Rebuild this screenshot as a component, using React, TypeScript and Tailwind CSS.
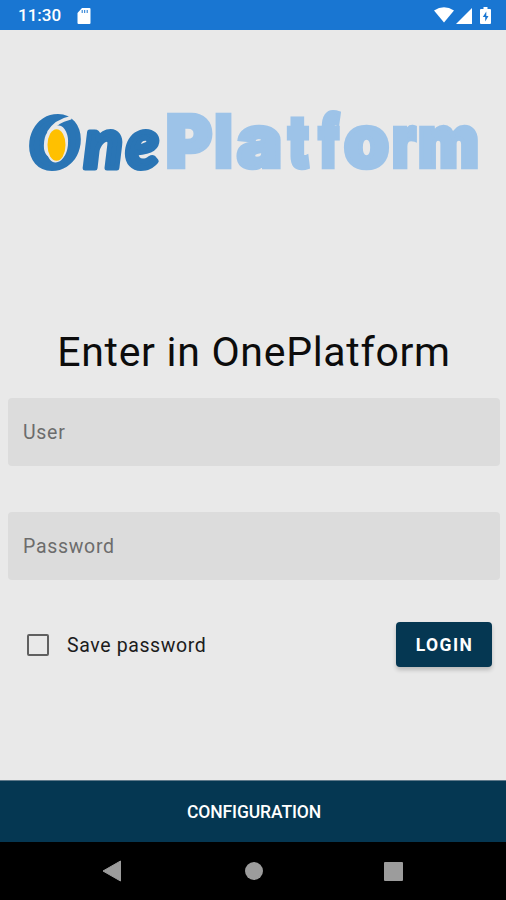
import React from 'react';

type Glyph = { char: string; x: number; width: number };

const platformGlyphs: Glyph[] = [
  { char: 'P', x: 166, width: 46 },
  { char: 'l', x: 214.5, width: 18 },
  { char: 'a', x: 237, width: 45 },
  { char: 't', x: 288, width: 21 },
  { char: 'f', x: 318.5, width: 21 },
  { char: 'o', x: 344, width: 45 },
  { char: 'r', x: 392, width: 24 },
  { char: 'm', x: 418, width: 61 },
];

const oneGlyphs: Glyph[] = [
  { char: 'O', x: 29, width: 51 },
  { char: 'n', x: 84, width: 39 },
  { char: 'e', x: 126, width: 33 },
];

function Logo() {
  return (
    <svg width="506" height="120" viewBox="0 80 506 120" aria-label="OnePlatform">
      <g
        fill="#2a75b5"
        stroke="#2a75b5"
        strokeWidth="5"
        strokeLinejoin="round"
        fontFamily="Lato, sans-serif"
        fontWeight="900"
        fontStyle="italic"
        fontSize="71"
      >
        {oneGlyphs.map((g) => (
          <text key={g.char} x={g.x} y="167.5" textLength={g.width} lengthAdjust="spacingAndGlyphs">
            {g.char}
          </text>
        ))}
      </g>
      <ellipse cx="57" cy="144" rx="11" ry="18.5" fill="#e9e9e9" transform="rotate(6 57 144)" />
      <path d="M49 132Q56 121 70 118" fill="none" stroke="#e9e9e9" strokeWidth="3.5" strokeLinecap="round" />
      <ellipse cx="56.5" cy="145" rx="9" ry="15.8" fill="#ffc000" />
      <g
        fill="#9dc3e8"
        stroke="#9dc3e8"
        strokeWidth="4.5"
        fontFamily="Inter, sans-serif"
        fontWeight="900"
        fontSize="72"
      >
        {platformGlyphs.map((g) => (
          <text key={g.char} x={g.x} y="167" textLength={g.width} lengthAdjust="spacingAndGlyphs">
            {g.char}
          </text>
        ))}
      </g>
    </svg>
  );
}

function StatusBar() {
  return (
    <div className="flex h-[30px] shrink-0 items-center bg-[#1976d2] pr-[15px] pl-[18px] text-white">
      <span className="pt-0.5 text-[17px] font-medium">11:30</span>
      <svg className="mt-0.5 ml-[16px]" width="14" height="16" viewBox="0 0 14 16" fill="currentColor">
        <path d="M5 0h7.5Q13.5 0 13.5 1v14q0 1-1 1h-11q-1 0-1-1V5z" />
        <path d="M5.2 2v3M7.7 2v3M10.2 2v3" stroke="#1976d2" strokeWidth="1" />
      </svg>
      <svg className="ml-auto" width="20" height="16" viewBox="0 0 20 16" fill="currentColor">
        <path d="M0 3.5Q10-3 20 3.5L10 15.5z" />
      </svg>
      <svg className="mt-px ml-[2px]" width="16" height="16" viewBox="0 0 16 16" fill="currentColor">
        <path d="M0 16 16 0v16z" />
      </svg>
      <svg className="ml-[8px]" width="11" height="17" viewBox="0 0 11 17" fill="currentColor">
        <path d="M3.5 0h4v2H10q1 0 1 1v13q0 1-1 1H1q-1 0-1-1V3q0-1 1-1h2.5z" />
        <path d="M6.3 4.5 2.8 10h2.4v4.5L8.5 9H6.3z" fill="#1976d2" />
      </svg>
    </div>
  );
}

function Field({ label }: { label: string }) {
  return (
    <div className="flex h-[68px] items-center rounded-[4px] bg-[#dcdcdc] px-[15px] pt-0.5 text-[19.5px] tracking-[0.7px] text-[#6c6c6c]">
      {label}
    </div>
  );
}

export default function App() {
  return (
    <div className="flex h-[900px] w-[506px] flex-col overflow-hidden bg-[#e9e9e9] font-['Roboto',sans-serif]">
      <StatusBar />
      <main className="flex flex-1 flex-col pt-[50px]">
        <Logo />
        <h1 className="mt-[124px] pl-[2px] text-center text-[41px] leading-[56px] tracking-[0.7px] whitespace-nowrap text-[#0c0c0c]">
          Enter in OnePlatform
        </h1>
        <div className="mt-[18px] mr-[6px] ml-2 flex flex-col gap-[46px]">
          <Field label="User" />
          <Field label="Password" />
        </div>
        <div className="mt-[42px] flex items-center justify-between pr-[14px] pl-[27px]">
          <label className="flex items-center text-[19.5px] tracking-[0.62px] text-[#1c1c1c]">
            <span className="mr-[18px] size-[22px] rounded-[2px] border-2 border-[#606060]" />
            <span className="pt-[3px]">Save password</span>
          </label>
          <button className="h-[45px] w-[96px] rounded-[4px] bg-[#053752] pt-px pl-px text-[17.5px] font-bold tracking-[1.4px] text-white shadow-[0_3px_4px_rgba(0,0,0,0.2)]">
            LOGIN
          </button>
        </div>
      </main>
      <button className="h-[62px] shrink-0 border-t border-[#60798a] bg-[#053752] pt-px pl-[2px] text-[17.5px] font-medium tracking-[-0.1px] text-white">
        CONFIGURATION
      </button>
      <nav className="flex h-[58px] shrink-0 items-center justify-between bg-black pr-[103px] pl-[102px] text-[#9c9c9c]">
        <svg width="20" height="22" viewBox="0 0 20 22" fill="currentColor">
          <path d="M18.5 1v20L1 11z" stroke="currentColor" strokeLinejoin="round" />
        </svg>
        <span className="ml-px size-[18px] rounded-full bg-current" />
        <span className="size-[19px] rounded-[1px] bg-current" />
      </nav>
    </div>
  );
}
